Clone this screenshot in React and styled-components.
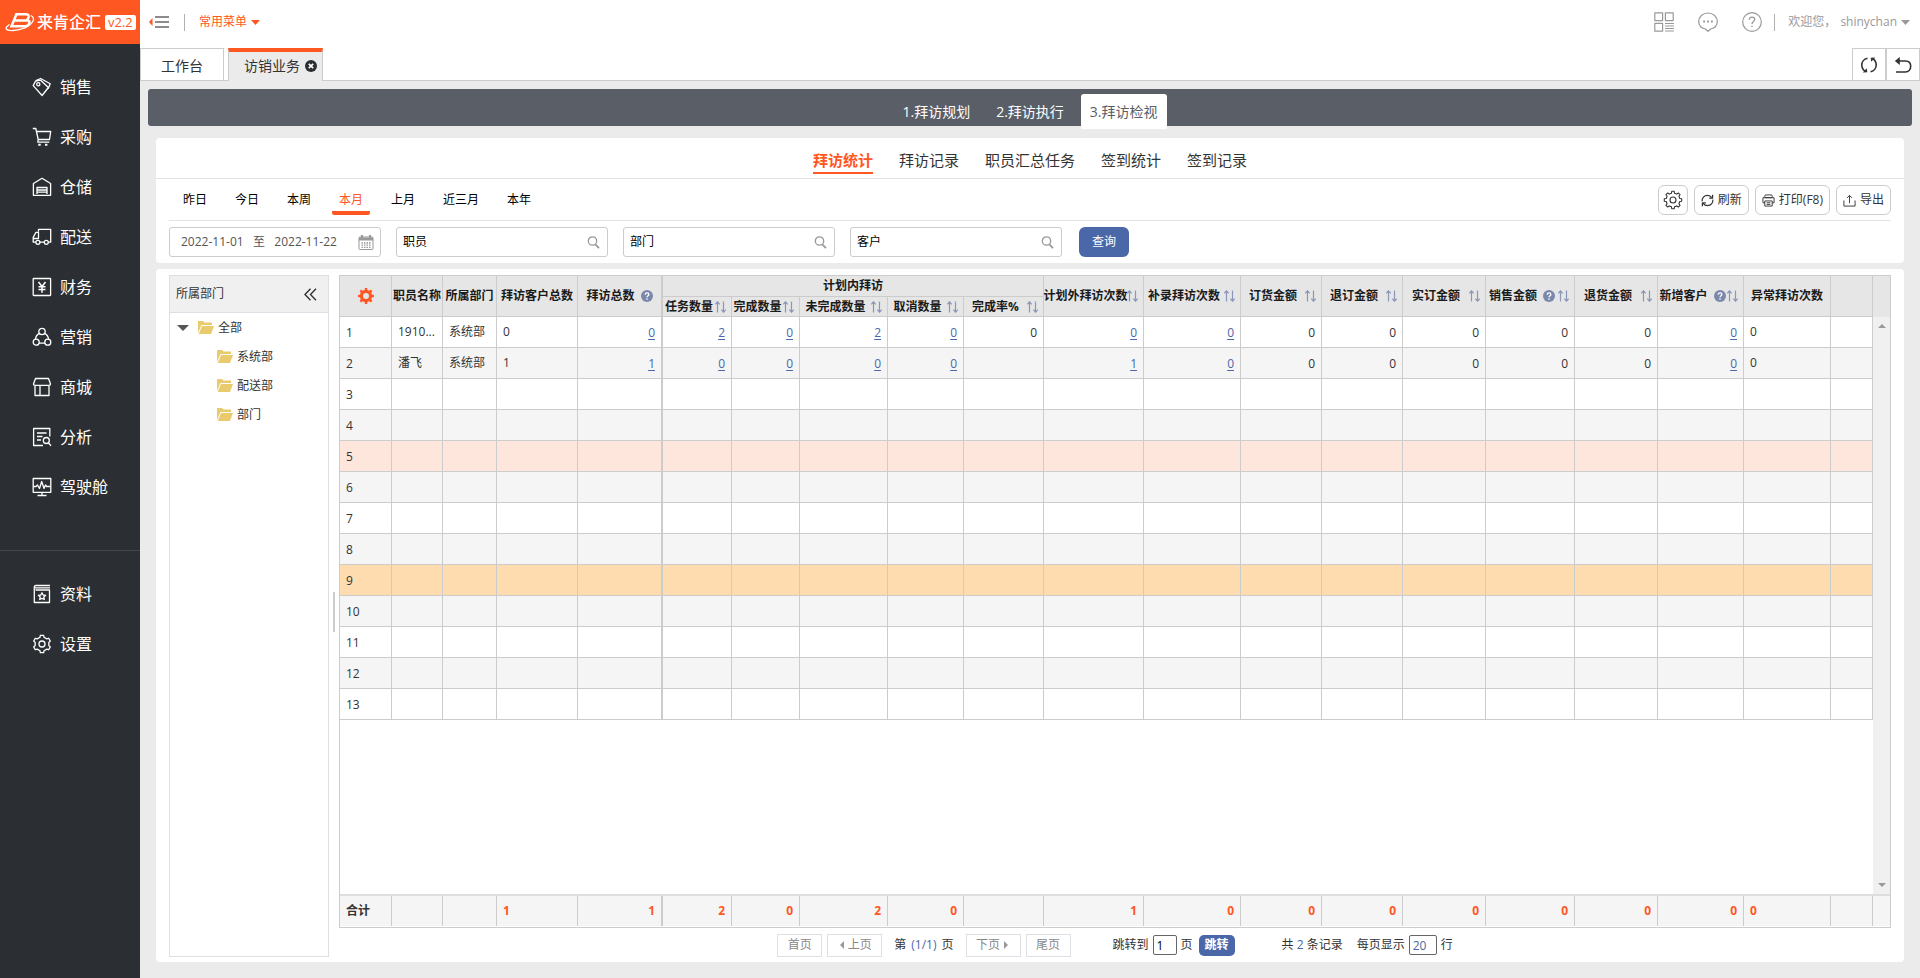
import React from "react";
import styled, { createGlobalStyle } from "styled-components";

const ORANGE = "#ff5722";
const BLUE = "#4a68a8";
const LINE = "#cccccc";

const GlobalStyle = createGlobalStyle`
  * {
    box-sizing: border-box;
  }
  body {
    margin: 0;
    color: #333;
    font: 12px/18px "Open Sans", "Noto Sans CJK SC", sans-serif;
  }
  button, input {
    font: inherit;
    margin: 0;
  }
  button {
    padding: 0;
    border: 0;
    background: none;
    color: inherit;
    cursor: pointer;
    white-space: nowrap;
  }
  a {
    color: inherit;
    text-decoration: none;
  }
  svg {
    display: block;
    flex: none;
  }
`;

/* ---------- icons ---------- */

const gearPath = (teeth, outer, inner, c) => {
  const step = (Math.PI * 2) / teeth;
  const at = (a, r) =>
    `${(c + r * Math.sin(a)).toFixed(2)} ${(c - r * Math.cos(a)).toFixed(2)}`;
  let d = "";
  for (let i = 0; i < teeth; i++) {
    const a = i * step;
    d += `${i ? "L" : "M"}${at(a - step * 0.28, inner)}L${at(a - step * 0.18, outer)}`;
    d += `L${at(a + step * 0.18, outer)}L${at(a + step * 0.28, inner)}`;
  }
  return d + "Z";
};

const Line = ({ size = 20, box = 20, w = 1.3, children }) => (
  <svg
    width={size}
    height={size}
    viewBox={`0 0 ${box} ${box}`}
    fill="none"
    stroke="currentColor"
    strokeWidth={w}
    strokeLinejoin="round"
    aria-hidden="true"
  >
    {children}
  </svg>
);

const TagIcon = () => (
  <Line>
    <path d="M1.2 8.6 3.6 4l5-.8L16.4 10.500l-6.300 8z" />
    <path d="M4 3.600 8.600 1.500l9.600 5.300-2 5" />
    <circle cx="6.300" cy="7.300" r="1.600" />
  </Line>
);
const CartIcon = () => (
  <Line>
    <path d="M.8 1.500h3l2.400 11h11.300l1.200-8H4.600M6.200 12.500l-.4 2.600h11.500" />
    <path d="M6.300 17.800h2.400M13 17.800h2.400" strokeWidth="2" />
  </Line>
);
const WarehouseIcon = () => (
  <Line>
    <path d="M1.400 18.300V6.500L10 1.300l8.600 5.200v11.800z" />
    <path d="M5 17v-6.500h10V17M5 13h10M5 15.200h10" />
  </Line>
);
const TruckIcon = () => (
  <Line>
    <path d="M6.500 4.500V2.300h12.200v12.900h-2.400M12.300 15.200H8M3.800 15.200H1.200v-4.800L4 5.300h2.500v6.200H1.500" />
    <circle cx="5.900" cy="15.300" r="2" />
    <circle cx="14.300" cy="15.300" r="2" />
  </Line>
);
const YuanIcon = () => (
  <Line>
    <rect x="1.200" y="1.500" width="17.400" height="17" rx=".5" />
    <path d="m6.500 5 3.500 4.500L13.500 5M10 9.500v6.300M6.500 9.800h7M6.500 12.600h7" strokeWidth="1.500" />
  </Line>
);
const MarketIcon = () => (
  <Line>
    <circle cx="10" cy="4.500" r="3.200" />
    <circle cx="4.200" cy="15.200" r="3" />
    <circle cx="15.800" cy="15.200" r="3" />
    <path d="M7.300 6.300C5 7.500 3.700 9.500 3.400 12.300M12.700 6.300c2.300 1.200 3.600 3.200 3.900 6M7 16.200h6" />
  </Line>
);
const ShopIcon = () => (
  <Line>
    <path d="M3.500 1.500h13l2 5.500c0 1-.7 1.300-1.500 1.300H3c-.8 0-1.500-.3-1.500-1.300zM3 8.300v10.200h14V8.300M8 8.300v10.200" />
  </Line>
);
const ReportIcon = () => (
  <Line>
    <path d="M17.800 9.500v-8H1.600v17H11M5 6h9.500M5 9.500h5.500M5 13h4" />
    <circle cx="14.300" cy="13.500" r="3" />
    <path d="m16.300 15.800 2.700 3" />
  </Line>
);
const MonitorIcon = () => (
  <Line>
    <path d="M1.200 1.500h17.600v13.800H1.200zM10 15.300v3M5.500 18.500h9" />
    <path d="M1.500 9.500H4l1.500-1.500 2 3.500 2.200-7 2.300 7 1.500-3.500 1.200 1.500h3.500" />
  </Line>
);
const BookIcon = () => (
  <Line>
    <path d="M18 1.500H4C2.800 1.500 2.300 2 2.300 3.200v15.300H17.500V6H3.500M3 3.800h15" />
    <path d="m10 8.800 1.100 2.200 2.500.3-1.800 1.700.5 2.500-2.300-1.200-2.300 1.200.5-2.500-1.800-1.700 2.500-.3z" />
  </Line>
);
const GearIcon = ({ teeth = 6, size = 20, w = 1.3 }) => (
  <Line size={size} w={w}>
    <path d={gearPath(teeth, 8.8, 7, 10)} />
    <circle cx="10" cy="10" r="3" />
  </Line>
);
const SolidGearIcon = () => (
  <svg width="16" height="16" viewBox="0 0 16 16" aria-hidden="true">
    <path
      fill={ORANGE}
      fillRule="evenodd"
      d={gearPath(8, 8, 6.2, 8) + "M8 5a3 3 0 1 0 0 6 3 3 0 0 0 0-6Z"}
    />
  </svg>
);
const LogoMark = () => (
  <svg width="30" height="20" viewBox="0 0 30 20" fill="none" stroke="#fff" aria-hidden="true">
    <path d="M10.500 2.200h10.500c3 0 3.200 2.300 2.200 4L21.500 8.600M9 8.500h13.500c2.300 0 2.500 1.500 1.600 3l-.5.900c-.8 1.300-2 1.800-3.600 1.800H6.500L11.500 2" strokeWidth="2.500" />
    <path d="M4.500 12.500C-1.500 16.500 1 18.800 8 18.500c8-.4 17-3.500 20-9.500 1-2.200.3-4.300-2.200-5.500" strokeWidth="1.300" />
  </svg>
);
const CollapseIcon = () => (
  <svg width="20" height="14" viewBox="0 0 20 14" aria-hidden="true">
    <path d="M3.500 3v8L0 7z" fill={ORANGE} />
    <path d="M6 2h14M6 7h14M6 12h14" stroke="#8c8c8c" strokeWidth="2" />
  </svg>
);
const Caret = () => (
  <svg width="9" height="5" viewBox="0 0 9 5" aria-hidden="true">
    <path d="M0 0h9L4.500 5z" fill="currentColor" />
  </svg>
);
const CloseIcon = () => (
  <svg width="12" height="12" viewBox="0 0 12 12" aria-hidden="true">
    <circle cx="6" cy="6" r="6" fill="#2b2f33" />
    <path d="m3.800 3.800 4.400 4.400m0-4.400L3.800 8.200" stroke="#fff" strokeWidth="1.700" />
  </svg>
);
const AppsIcon = () => (
  <Line w={1.2}>
    <path d="M.8.800h7.800v7.800H.8zM11.400.800h7.800v7.800h-7.800zM.8 11.400h7.800v7.800H.8zM11 11.500h9M11 14h9M11 16.500h9M11 19h9" />
  </Line>
);
const MessageIcon = () => (
  <Line w={1.2}>
    <path d="M7.300 17C3.300 16 .7 13 .7 9.500.7 4.800 4.800 1 10 1s9.300 3.800 9.300 8.500c0 3.500-2.600 6.500-6.600 7.500L10 19.300z" />
    <path d="M5.200 9.500h1.800M9.100 9.500h1.800M13 9.500h1.800" strokeWidth="1.800" />
  </Line>
);
const HelpIcon = () => (
  <Line w={1.2}>
    <circle cx="10" cy="10" r="9.300" />
    <path d="M7.300 7.800c0-3.700 5.400-3.500 5.400-.4 0 2-2.700 2.200-2.700 4.600M10 13.500v1.600" strokeWidth="1.300" />
  </Line>
);
const ReloadIcon = () => (
  <Line size={18} box={18} w={1.6}>
    <path d="M7.500 2.300C3.500 3 1.800 6.300 1.800 9s1.200 5 3.700 6.500M10.500 15.700c4-.7 5.700-4 5.700-6.700s-1.200-5-3.700-6.500" />
    <path d="m2.800 16.500 4.500-.3-.5-4zM15.200 1.500l-4.500.3.500 4z" fill="currentColor" stroke="none" />
  </Line>
);
const BackIcon = () => (
  <Line size={18} box={18} w={1.6}>
    <path d="M4 5h7.500c3.300 0 5.200 2.200 5.200 5.300s-2 5.700-5.200 5.700H2" />
    <path d="M.8 5 5.800 1v8z" fill="currentColor" stroke="none" />
  </Line>
);
const RefreshIcon = () => (
  <Line size={13} box={14} w={1.3}>
    <path d="M1.200 8C.8 4.200 3.400 1.500 7 1.500c2 0 3.600 1 4.700 2.500M12.800 6c.4 3.800-2.200 6.500-5.800 6.500-2 0-3.600-1-4.700-2.500" />
    <path d="M12.500.800v3.700H8.800M1.500 13.200V9.500h3.700" />
  </Line>
);
const PrintIcon = () => (
  <Line size={13} box={14} w={1}>
    <rect x="3" y="1" width="8" height="3" rx="1" />
    <path d="M3 9.500H1V4h12v5.500h-2M3 7.500h8V13H3zM5 9.500h4M5 11.200h4" />
  </Line>
);
const ExportIcon = () => (
  <Line size={13} box={14} w={1}>
    <path d="M1 7v6h12V7M7 10V1.500M4.300 4.200 7 1.500l2.700 2.700" />
  </Line>
);
const CalendarIcon = () => (
  <svg width="16" height="15" viewBox="0 0 16 15" fill="none" stroke="#999" aria-hidden="true">
    <rect x="1" y="2" width="14" height="12.500" rx="1" />
    <path d="M1 4h14" strokeWidth="3" />
    <path d="M4 0v3M12 0v3" strokeWidth="2" />
    <path d="M3.500 8h9M3.500 10.200h9M3.500 12.400h9" strokeWidth="1.300" strokeDasharray="1.500 1" />
  </svg>
);
const SearchIcon = () => (
  <Line size={13} box={13} w={1.3}>
    <circle cx="5.500" cy="5" r="4.200" />
    <path d="m8.300 8.300 3.700 3.900" strokeWidth="1.700" />
  </Line>
);
const ChevronsIcon = () => (
  <Line size={13} box={13} w={1.4}>
    <path d="M6.500.800 1 6.500l5.500 5.700M12 .800 6.500 6.500l5.500 5.700" strokeLinejoin="miter" />
  </Line>
);
const FolderIcon = () => (
  <svg width="16" height="13" viewBox="0 0 16 13" fill="#e9cb6e" aria-hidden="true">
    <path d="M0 0h5l1.500 1.500h7.500V4H3.500L0 12z" />
    <path d="M4 5h12l-3 8H.7z" />
  </svg>
);
const SortIcon = () => (
  <svg width="11" height="12" viewBox="0 0 11 12" fill="none" stroke="#8b97b8" strokeWidth="1.2" aria-hidden="true">
    <path d="M2.500 11.500V1M.3 3.300 2.500.800l2.200 2.500M8.500.500V11M6.300 8.700l2.200 2.500 2.200-2.500" />
  </svg>
);
const TipIcon = () => (
  <svg width="12" height="12" viewBox="0 0 12 12" fill="none" aria-hidden="true">
    <circle cx="6" cy="6" r="6" fill="#7c87ac" />
    <path d="M4.200 4.700c0-2.500 3.700-2.300 3.700-.2C7.900 5.800 6 5.800 6 7.200M6 8.200v1.500" stroke="#fff" strokeWidth="1.300" />
  </svg>
);
const Triangle = ({ d, size = 8, color = "#999" }) => (
  <svg width={size} height={size} viewBox="0 0 8 8" aria-hidden="true">
    <path d={d} fill={color} />
  </svg>
);

/* ---------- shell ---------- */

const Shell = styled.div`
  display: flex;
  min-height: 100vh;
`;

const Sidebar = styled.nav`
  flex: none;
  width: 140px;
  background: #2b2f33;
  color: #fff;
`;

const Logo = styled.div`
  display: flex;
  align-items: center;
  height: 44px;
  padding-left: 5px;
  background: ${ORANGE};
  font-size: 16px;
  font-weight: 500;
  white-space: nowrap;
`;

const LogoText = styled.span`
  margin: 0 4px 0 2px;
`;

const Version = styled.span`
  padding: 0 3px;
  border-radius: 2px;
  background: #fff;
  color: ${ORANGE};
  font-size: 13px;
  font-weight: 400;
  line-height: 15px;
`;

const MenuGroup = styled.div`
  padding: 18px 0 38px;
  & + & {
    border-top: 1px solid #43474b;
  }
`;

const MenuItem = styled.a`
  display: flex;
  align-items: center;
  gap: 8px;
  height: 50px;
  padding-left: 32px;
  font-size: 16px;
`;

const Main = styled.div`
  flex: 1;
  min-width: 0;
  display: flex;
  flex-direction: column;
  background: #ebebeb;
`;

const Topbar = styled.header`
  display: flex;
  align-items: center;
  height: 44px;
  padding: 0 10px 0 9px;
  background: #fff;
  color: #999;
`;

const Divider = styled.span`
  width: 1px;
  height: 17px;
  margin-left: ${(p) => (p.$lead ? 15 : 0)}px;
  background: #b0b0b0;
`;

const CommonMenu = styled.button`
  display: flex;
  align-items: center;
  gap: 4px;
  margin-left: 14px;
  color: ${ORANGE};
`;

const TopIcons = styled.div`
  display: flex;
  gap: 24px;
  margin-left: auto;
  margin-right: 12px;
`;

const User = styled.button`
  display: flex;
  align-items: center;
  gap: 4px;
  margin-left: 13px;
`;

const TabStrip = styled.div`
  display: flex;
  height: 37px;
  padding-top: 4px;
  border-bottom: 1px solid ${LINE};
  background: #fff;
`;

const PageTab = styled.div`
  display: flex;
  align-items: center;
  gap: 5px;
  height: ${(p) => (p.$active ? 33 : 32)}px;
  margin-right: 4px;
  padding: ${(p) => (p.$active ? "0 5px 2px 15px" : "2px 20px 0")};
  border: 1px solid ${LINE};
  border-bottom: 0;
  border-top: ${(p) => (p.$active ? `4px solid ${ORANGE}` : `1px solid ${LINE}`)};
  background: ${(p) => (p.$active ? "#ebebeb" : "#fff")};
  font-size: 14px;
`;

const StripTools = styled.div`
  display: flex;
  margin-left: auto;
`;

const StripButton = styled.button`
  display: grid;
  place-items: center;
  width: 34px;
  border: 1px solid ${LINE};
  border-bottom: 0;
`;

/* ---------- page ---------- */

const Page = styled.main`
  flex: 1;
  display: flex;
  flex-direction: column;
  padding: 8px 8px 16px;
`;

const Steps = styled.div`
  display: flex;
  justify-content: center;
  gap: 8px;
  height: 37px;
  padding-top: 5px;
  border-radius: 3px;
  background: #5a5e66;
`;

const Step = styled.button`
  height: 35px;
  padding: 0 9px;
  border-radius: 3px 3px 0 0;
  background: ${(p) => (p.$active ? "#fff" : "transparent")};
  color: ${(p) => (p.$active ? "#5a5e66" : "#fff")};
  font-size: 14px;
`;

const Card = styled.section`
  margin: 0 8px;
  border-radius: 4px;
  background: #fff;
`;

const FilterCard = styled(Card)`
  margin-top: 12px;
  margin-bottom: 6px;
`;

const SubTabs = styled.div`
  display: flex;
  justify-content: center;
  gap: 26px;
  height: 41px;
  padding-top: 10px;
  border-bottom: 1px solid #e3e3e3;
`;

const SubTab = styled.button`
  height: 26px;
  border-bottom: 2px solid ${(p) => (p.$active ? ORANGE : "transparent")};
  color: ${(p) => (p.$active ? ORANGE : "#333")};
  font-size: 15px;
  font-weight: ${(p) => (p.$active ? 700 : 400)};
`;

const RangeRow = styled.div`
  display: flex;
  align-items: center;
  gap: 14px;
  height: 42px;
  margin: 0 13px;
  padding: 1px 0 0 7px;
  border-bottom: 1px solid #e3e3e3;
`;

const Range = styled.button`
  height: 30px;
  padding: 4px 7px 0;
  border-bottom: 4px solid ${(p) => (p.$active ? ORANGE : "transparent")};
  border-radius: 2px;
  color: ${(p) => (p.$active ? ORANGE : "#000")};
`;

const Tools = styled.div`
  display: flex;
  align-items: center;
  gap: 6px;
  margin-left: auto;
`;

const Tool = styled.button`
  display: flex;
  align-items: center;
  justify-content: center;
  gap: 4px;
  height: 30px;
  min-width: 30px;
  padding: 0 ${(p) => (p.$icon ? 4 : 6)}px;
  border: 1px solid ${LINE};
  border-radius: 6px;
`;

const SearchRow = styled.div`
  display: flex;
  gap: 15px;
  padding: 6px 13px;
`;

const Field = styled.label`
  display: flex;
  align-items: center;
  width: 212px;
  height: 30px;
  padding: 0 ${(p) => (p.$date ? "6px 0 11px" : "7px 0 6px")};
  border: 1px solid ${LINE};
  border-radius: 3px;
  color: #999;
`;

const FieldInput = styled.input`
  flex: 1;
  min-width: 0;
  padding: 0;
  border: 0;
  outline: 0;
  background: none;
  color: #555;
  &::placeholder {
    color: #000;
    opacity: 1;
  }
`;

const Query = styled.button`
  width: 50px;
  height: 30px;
  margin-left: 2px;
  border-radius: 6px;
  background: ${BLUE};
  color: #fff;
`;

const DataCard = styled(Card)`
  flex: 1;
  display: flex;
  padding: 6px 13px 5px;
`;

/* ---------- department tree ---------- */

const TreePanel = styled.aside`
  flex: none;
  width: 160px;
  border: 1px solid #dcdfe3;
`;

const TreeHead = styled.div`
  display: flex;
  align-items: center;
  justify-content: space-between;
  height: 37px;
  padding: 0 11px 0 6px;
  border-bottom: 1px solid #dcdfe3;
  background: #f0f0f0;
`;

const TreeRow = styled.div`
  display: flex;
  align-items: center;
  gap: 4px;
  height: 29px;
  padding-left: ${(p) => (p.$child ? 47 : 7)}px;
`;

const TreeToggle = styled.button`
  width: 17px;
`;

const Splitter = styled.div`
  flex: none;
  display: flex;
  align-items: center;
  justify-content: center;
  width: 10px;
  padding-bottom: 8px;
  &::before {
    content: "";
    width: 2px;
    height: 40px;
    background: ${LINE};
  }
`;

/* ---------- grid ---------- */

const GridArea = styled.div`
  flex: 1;
  min-width: 0;
  display: flex;
  flex-direction: column;
`;

const GridBox = styled.div`
  flex: 1;
  display: flex;
  flex-direction: column;
  border: 1px solid ${LINE};
`;

const GridBand = styled.div`
  display: flex;
  flex: ${(p) => (p.$grow ? 1 : "none")};
`;

const TotalBand = styled(GridBand)`
  padding-bottom: 1px;
  border-top: 2px solid #dedede;
`;

const GridSlot = styled.div`
  flex: 1;
  min-width: 0;
`;

const GridEdge = styled.div`
  flex: none;
  display: flex;
  flex-direction: column;
  align-items: center;
  justify-content: space-between;
  width: 17px;
  padding: 5px 0;
  background: ${(p) => p.$bg};
`;

const Table = styled.table`
  width: 100%;
  table-layout: fixed;
  border-collapse: separate;
  border-spacing: 0;
`;

const Th = styled.th`
  height: ${(p) => (p.$group ? 21 : 20)}px;
  padding: 0;
  border-right: ${(p) => (p.$wide ? 2 : 1)}px solid ${LINE};
  border-bottom: 1px solid ${LINE};
  background: #e6e6e6;
  color: #1a1a1a;
  white-space: nowrap;
`;

const HeadInner = styled.div`
  display: flex;
  align-items: center;
  padding-right: ${(p) => (p.$sort ? 5 : 0)}px;
`;

const HeadLabel = styled.span`
  flex: 1;
  min-width: 0;
  display: flex;
  align-items: center;
  justify-content: center;
  gap: 6px;
`;

const ColumnButton = styled.button`
  display: flex;
  justify-content: center;
  width: 100%;
`;

const rowColor = (n) => {
  if (n === 5) return "#ffe6dd";
  if (n === 9) return "#ffdcb0";
  return n % 2 ? "#fff" : "#f5f5f5";
};

const Row = styled.tr`
  background: ${(p) => rowColor(p.$n)};
`;

const Td = styled.td`
  height: 31px;
  padding: ${(p) => (p.$low ? 2 : 0)}px 6px 0;
  border-right: ${(p) => (p.$wide ? 2 : 1)}px solid ${LINE};
  border-bottom: 1px solid ${LINE};
  text-align: ${(p) => (p.$right ? "right" : "left")};
  white-space: nowrap;
`;

const TotalTd = styled(Td)`
  height: 30px;
  border-bottom: 0;
  background: #f5f5f5;
  color: ${(p) => (p.$label ? "#333" : ORANGE)};
  font-weight: 700;
`;

const CellLink = styled.a`
  color: ${BLUE};
  text-decoration: underline;
  text-underline-offset: 2px;
`;

/* ---------- pager ---------- */

const Pager = styled.div`
  display: flex;
  align-items: center;
  justify-content: center;
  height: 29px;
  padding-top: 5px;
  white-space: nowrap;
`;

const PageButton = styled.button`
  display: flex;
  align-items: center;
  justify-content: center;
  gap: 2px;
  width: ${(p) => (p.$arrow ? 55 : 45)}px;
  height: 23px;
  margin-right: 5px;
  border: 1px solid #dcdfe3;
  color: #888;
`;

const PageInfo = styled.span`
  display: flex;
  gap: 5px;
  margin: 0 12px 0 7px;
`;

const Num = styled.span`
  color: ${BLUE};
`;

const PageField = styled.label`
  display: flex;
  align-items: center;
  gap: 4px;
  margin-left: ${(p) => p.$gap}px;
`;

const PageInput = styled.input`
  width: ${(p) => (p.$blue ? 28 : 24)}px;
  height: 20px;
  padding: 0 3px;
  border: 1px solid #666;
  border-radius: 2px;
  color: ${(p) => (p.$blue ? BLUE : "#000")};
`;

const JumpButton = styled.button`
  width: 36px;
  height: 21px;
  margin: 0 47px 0 6px;
  border-radius: 5px;
  background: ${BLUE};
  color: #fff;
  font-weight: 700;
`;

/* ---------- data ---------- */

const menu = [
  ["销售", TagIcon],
  ["采购", CartIcon],
  ["仓储", WarehouseIcon],
  ["配送", TruckIcon],
  ["财务", YuanIcon],
  ["营销", MarketIcon],
  ["商城", ShopIcon],
  ["分析", ReportIcon],
  ["驾驶舱", MonitorIcon],
];

const menuBottom = [
  ["资料", BookIcon],
  ["设置", GearIcon],
];

const columns = [
  { key: "no", w: 52 },
  { key: "name", w: 51, label: "职员名称" },
  { key: "dept", w: 54, label: "所属部门" },
  { key: "customers", w: 81, label: "拜访客户总数" },
  { key: "visits", w: 85, label: "拜访总数", tip: true, right: true, link: true, wide: true },
  { key: "tasks", w: 69, label: "任务数量", sort: true, right: true, link: true, planned: true },
  { key: "done", w: 68, label: "完成数量", sort: true, right: true, link: true, planned: true },
  { key: "undone", w: 88, label: "未完成数量", sort: true, right: true, link: true, planned: true },
  { key: "cancelled", w: 76, label: "取消数量", sort: true, right: true, link: true, planned: true },
  { key: "rate", w: 80, label: "完成率%", sort: true, right: true, planned: true },
  { key: "unplanned", w: 100, label: "计划外拜访次数", sort: true, right: true, link: true },
  { key: "added", w: 97, label: "补录拜访次数", sort: true, right: true, link: true },
  { key: "ordered", w: 81, label: "订货金额", sort: true, right: true },
  { key: "unordered", w: 81, label: "退订金额", sort: true, right: true },
  { key: "actual", w: 83, label: "实订金额", sort: true, right: true },
  { key: "sales", w: 89, label: "销售金额", tip: true, sort: true, right: true },
  { key: "returned", w: 83, label: "退货金额", sort: true, right: true },
  { key: "newCustomers", w: 86, label: "新增客户", tip: true, sort: true, right: true, link: true },
  { key: "abnormal", w: 87, label: "异常拜访次数" },
  { key: "blank", w: 42 },
];

const toRow = (values) =>
  Object.fromEntries(columns.map((c, i) => [c.key, values[i]]));

const records = [
  [1, "1910...", "系统部", 0, 0, 2, 0, 2, 0, 0, 0, 0, 0, 0, 0, 0, 0, 0, 0],
  [2, "潘飞", "系统部", 1, 1, 0, 0, 0, 0, "", 1, 0, 0, 0, 0, 0, 0, 0, 0],
].map(toRow);

const totals = toRow([
  "合计", "", "", 1, 1, 2, 0, 2, 0, "", 1, 0, 0, 0, 0, 0, 0, 0, 0,
]);

const rows = Array.from({ length: 13 }, (_, i) => records[i] || { no: i + 1 });

const Cols = () => (
  <colgroup>
    {columns.map((c) => (
      <col key={c.key} width={c.w} />
    ))}
  </colgroup>
);

const HeadCell = ({ col, span }) => (
  <Th rowSpan={span} $wide={col.wide} scope="col">
    {col.key === "no" ? (
      <ColumnButton aria-label="列设置">
        <SolidGearIcon />
      </ColumnButton>
    ) : (
      <HeadInner $sort={col.sort}>
        <HeadLabel>
          {col.label}
          {col.tip && <TipIcon />}
        </HeadLabel>
        {col.sort && <SortIcon />}
      </HeadInner>
    )}
  </Th>
);

const MenuList = ({ items }) => (
  <MenuGroup>
    {items.map(([label, Icon]) => (
      <MenuItem href="#" key={label}>
        <Icon />
        {label}
      </MenuItem>
    ))}
  </MenuGroup>
);

const VisitGrid = () => {
  const firstPlanned = columns.findIndex((c) => c.planned);
  return (
    <GridBox>
      <GridBand>
        <GridSlot>
          <Table>
            <Cols />
            <thead>
              <tr>
                {columns.map((c, i) => {
                  if (i === firstPlanned) {
                    return (
                      <Th key="group" colSpan={5} $group scope="colgroup">
                        计划内拜访
                      </Th>
                    );
                  }
                  return c.planned ? null : <HeadCell key={c.key} col={c} span={2} />;
                })}
              </tr>
              <tr>
                {columns
                  .filter((c) => c.planned)
                  .map((c) => (
                    <HeadCell key={c.key} col={c} />
                  ))}
              </tr>
            </thead>
          </Table>
        </GridSlot>
        <GridEdge $bg="#e6e6e6" />
      </GridBand>
      <GridBand $grow>
        <GridSlot>
          <Table>
            <Cols />
            <tbody>
              {rows.map((row) => (
                <Row key={row.no} $n={row.no}>
                  {columns.map((c) => (
                    <Td
                      key={c.key}
                      $right={c.right}
                      $wide={c.wide}
                      $low={c.right || c.key === "no"}
                    >
                      {c.link && row[c.key] !== undefined ? (
                        <CellLink href="#">{row[c.key]}</CellLink>
                      ) : (
                        row[c.key]
                      )}
                    </Td>
                  ))}
                </Row>
              ))}
            </tbody>
          </Table>
        </GridSlot>
        <GridEdge $bg="#f0f0f0">
          <Triangle d="M0 6h8L4 2z" />
          <Triangle d="M0 2h8L4 6z" />
        </GridEdge>
      </GridBand>
      <TotalBand>
        <GridSlot>
          <Table>
            <Cols />
            <tbody>
              <tr>
                {columns.map((c) => (
                  <TotalTd
                    key={c.key}
                    $right={c.right}
                    $wide={c.wide}
                    $label={c.key === "no"}
                  >
                    {totals[c.key]}
                  </TotalTd>
                ))}
              </tr>
            </tbody>
          </Table>
        </GridSlot>
        <GridEdge $bg="#f5f5f5" />
      </TotalBand>
    </GridBox>
  );
};

const GridPager = () => (
  <Pager>
    <PageButton>首页</PageButton>
    <PageButton $arrow>
      <Triangle d="M6 0v8L2 4z" />
      上页
    </PageButton>
    <PageInfo>
      <span>第</span>
      <Num>(1/1)</Num>
      <span>页</span>
    </PageInfo>
    <PageButton $arrow>
      下页
      <Triangle d="M2 0v8l4-4z" />
    </PageButton>
    <PageButton>尾页</PageButton>
    <PageField $gap={37}>
      跳转到
      <PageInput defaultValue="1" />页
    </PageField>
    <JumpButton>跳转</JumpButton>
    <span>
      共 <Num>2</Num> 条记录
    </span>
    <PageField $gap={14}>
      每页显示
      <PageInput $blue defaultValue="20" />行
    </PageField>
  </Pager>
);

const App = () => (
  <>
    <GlobalStyle />
    <Shell>
      <Sidebar>
        <Logo>
          <LogoMark />
          <LogoText>来肯企汇</LogoText>
          <Version>v2.2</Version>
        </Logo>
        <MenuList items={menu} />
        <MenuList items={menuBottom} />
      </Sidebar>

      <Main>
        <Topbar>
          <button aria-label="收起菜单">
            <CollapseIcon />
          </button>
          <Divider $lead />
          <CommonMenu>
            常用菜单
            <Caret />
          </CommonMenu>
          <TopIcons>
            <button aria-label="应用">
              <AppsIcon />
            </button>
            <button aria-label="消息">
              <MessageIcon />
            </button>
            <button aria-label="帮助">
              <HelpIcon />
            </button>
          </TopIcons>
          <Divider />
          <User>
            <span>欢迎您，</span>
            <span>shinychan</span>
            <Caret />
          </User>
        </Topbar>

        <TabStrip>
          <PageTab>工作台</PageTab>
          <PageTab $active>
            访销业务
            <button aria-label="关闭">
              <CloseIcon />
            </button>
          </PageTab>
          <StripTools>
            <StripButton aria-label="重新加载">
              <ReloadIcon />
            </StripButton>
            <StripButton aria-label="返回">
              <BackIcon />
            </StripButton>
          </StripTools>
        </TabStrip>

        <Page>
          <Steps>
            <Step>1.拜访规划</Step>
            <Step>2.拜访执行</Step>
            <Step $active>3.拜访检视</Step>
          </Steps>

          <FilterCard>
            <SubTabs>
              {["拜访统计", "拜访记录", "职员汇总任务", "签到统计", "签到记录"].map((t, i) => (
                <SubTab key={t} $active={i === 0}>
                  {t}
                </SubTab>
              ))}
            </SubTabs>
            <RangeRow>
              {["昨日", "今日", "本周", "本月", "上月", "近三月", "本年"].map((t) => (
                <Range key={t} $active={t === "本月"}>
                  {t}
                </Range>
              ))}
              <Tools>
                <Tool $icon aria-label="设置">
                  <GearIcon teeth={8} w={1.1} />
                </Tool>
                <Tool>
                  <RefreshIcon />
                  刷新
                </Tool>
                <Tool>
                  <PrintIcon />
                  打印(F8)
                </Tool>
                <Tool>
                  <ExportIcon />
                  导出
                </Tool>
              </Tools>
            </RangeRow>
            <SearchRow>
              <Field $date>
                <FieldInput aria-label="日期" defaultValue="2022-11-01   至   2022-11-22" />
                <CalendarIcon />
              </Field>
              {["职员", "部门", "客户"].map((t) => (
                <Field key={t}>
                  <FieldInput aria-label={t} placeholder={t} />
                  <SearchIcon />
                </Field>
              ))}
              <Query>查询</Query>
            </SearchRow>
          </FilterCard>

          <DataCard>
            <TreePanel>
              <TreeHead>
                所属部门
                <button aria-label="收起">
                  <ChevronsIcon />
                </button>
              </TreeHead>
              <TreeRow>
                <TreeToggle aria-label="展开">
                  <Triangle size={12} d="M0 2h8L4 6z" color="#555" />
                </TreeToggle>
                <FolderIcon />
                全部
              </TreeRow>
              {["系统部", "配送部", "部门"].map((t) => (
                <TreeRow key={t} $child>
                  <FolderIcon />
                  {t}
                </TreeRow>
              ))}
            </TreePanel>
            <Splitter />
            <GridArea>
              <VisitGrid />
              <GridPager />
            </GridArea>
          </DataCard>
        </Page>
      </Main>
    </Shell>
  </>
);

export default App;
